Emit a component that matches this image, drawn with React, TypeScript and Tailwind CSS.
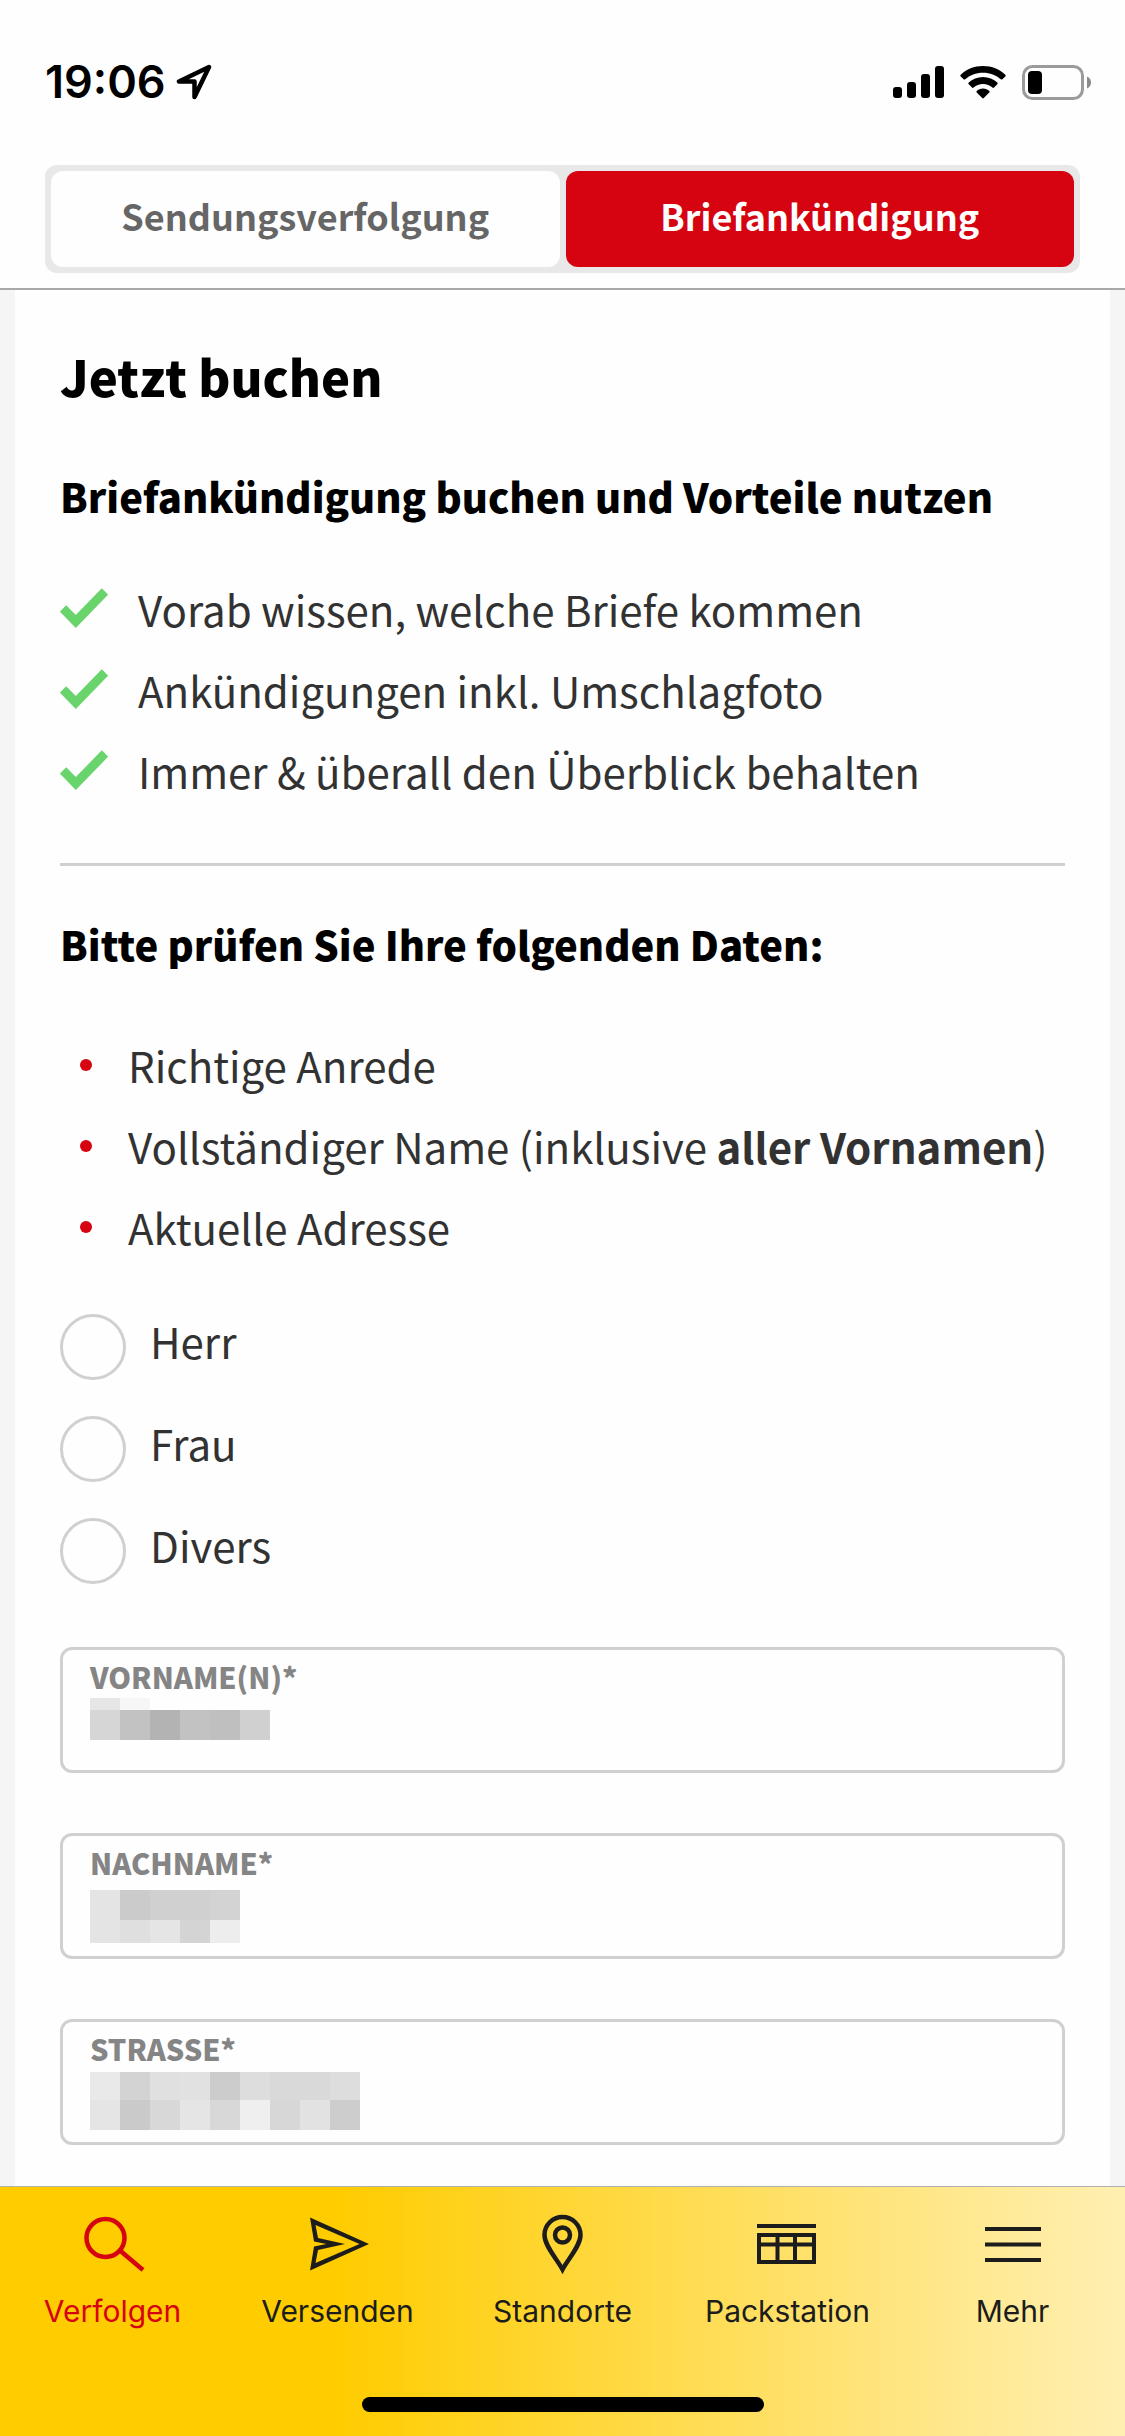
import { useState } from "react";
import type { ReactNode } from "react";

type Mosaic = { top: number; height: number; colors: string[] }[];

type FieldProps = {
  id: string;
  label: string;
  mosaic: Mosaic;
};

const ADVANTAGES = [
  "Vorab wissen, welche Briefe kommen",
  "Ankündigungen inkl. Umschlagfoto",
  "Immer & überall den Überblick behalten",
];

const SALUTATIONS = ["Herr", "Frau", "Divers"];

const FIELDS: FieldProps[] = [
  {
    id: "vorname",
    label: "VORNAME(N)*",
    mosaic: [
      { top: 0, height: 12, colors: ["#e6e6e6", "#f6f6f6"] },
      { top: 12, height: 30, colors: ["#d6d6d6", "#c2c2c2", "#b3b3b3", "#c2c2c2", "#bfbfbf", "#d0d0d0"] },
    ],
  },
  {
    id: "nachname",
    label: "NACHNAME*",
    mosaic: [
      { top: 6, height: 30, colors: ["#e4e4e4", "#cbcbcb", "#d0d0d0", "#d0d0d0", "#d3d3d3"] },
      { top: 36, height: 23, colors: ["#e4e4e4", "#dfdfdf", "#e5e5e5", "#d4d4d4", "#ededed"] },
    ],
  },
  {
    id: "strasse",
    label: "STRASSE*",
    mosaic: [
      {
        top: 2,
        height: 28,
        colors: ["#e9e9e9", "#d3d3d3", "#e0e0e0", "#e1e1e1", "#cccccc", "#dddddd", "#d9d9d9", "#d9d9d9", "#dddddd"],
      },
      {
        top: 30,
        height: 30,
        colors: ["#e5e5e5", "#cacaca", "#d8d8d8", "#e5e5e5", "#d8d8d8", "#efefef", "#d7d7d7", "#e2e2e2", "#cdcdcd"],
      },
    ],
  },
];

const NAV_ITEMS: { label: string; icon: ReactNode }[] = [
  {
    label: "Verfolgen",
    icon: (
      <g fill="none" stroke="currentColor" strokeWidth="4.5">
        <circle cx="22.5" cy="23" r="19" />
        <path d="M37 35.5 60 55" />
      </g>
    ),
  },
  {
    label: "Versenden",
    icon: (
      <path
        fill="currentColor"
        fillRule="evenodd"
        d="M2 2.5 61 29 2 55.5 6 31.5 18.5 29 6 26.5ZM7.5 10 10 23 37 29 10 35 7.5 48 51.5 29Z"
      />
    ),
  },
  {
    label: "Standorte",
    icon: (
      <g fill="none" stroke="currentColor" strokeWidth="4.5">
        <path d="M29.5 54.5C24 44 11.5 31 11.5 20a18 18 0 0 1 36 0C47.5 31 35 44 29.5 54.5Z" />
        <circle cx="29.5" cy="20" r="7.5" />
      </g>
    ),
  },
  {
    label: "Packstation",
    icon: (
      <g fill="none" stroke="currentColor" strokeWidth="4">
        <path d="M-1 11h59M1 20h55v27H1ZM1 29.5h55M19.5 20v27M37 20v27" />
      </g>
    ),
  },
  {
    label: "Mehr",
    icon: <path fill="none" stroke="currentColor" strokeWidth="4" d="M2 14h56M2 29.500h56M2 45h56" />,
  },
];

const StatusBar = () => (
  <div className="flex h-14 items-center pr-[34px] pl-[45px] font-['Inter',sans-serif] text-black">
    <span className="text-[45px] leading-[56px] font-semibold">19:06</span>
    <svg className="ml-2.5 h-9 w-9" viewBox="0 0 36 36" fill="none" stroke="currentColor" strokeWidth="4.5" strokeLinejoin="round">
      <path d="M33 3 3 17.5h15.500V33Z" />
    </svg>
    <div className="ml-auto flex items-center gap-4">
      <svg className="h-8 w-[51px]" viewBox="0 0 51 32" fill="currentColor">
        <rect x="0" y="21" width="9" height="11" rx="3" />
        <rect x="14" y="16" width="9" height="16" rx="3" />
        <rect x="28" y="8" width="9" height="24" rx="3" />
        <rect x="42" y="0" width="9" height="32" rx="3" />
      </svg>
      <svg className="h-[33px] w-[46px]" viewBox="0 0 46 33" fill="currentColor">
        <path d="M23 0C14 0 6.500 3.400.7 8.700c-.5.5-.5 1.200 0 1.700l2.900 2.900c.4.4 1.100.4 1.600 0C9.800 9.200 16 6.700 23 6.700s13.200 2.500 17.800 6.600c.5.4 1.200.4 1.600 0l2.900-2.900c.5-.5.5-1.200 0-1.700C39.500 3.400 32 0 23 0Z" />
        <path d="M23 11c-5.600 0-10.600 2.100-14.300 5.600-.5.5-.5 1.200 0 1.700l3.300 3.300c.4.4 1.100.4 1.600 0 2.500-2.200 5.800-3.600 9.400-3.600s6.900 1.400 9.400 3.600c.5.4 1.200.4 1.600 0l3.300-3.300c.5-.5.5-1.200 0-1.700C33.600 13.100 28.600 11 23 11Z" />
        <path d="M23 22.500c-2.500 0-4.700.9-6.300 2.400-.5.5-.5 1.100 0 1.600l5.500 5.600c.5.500 1.100.5 1.600 0l5.500-5.600c.5-.5.5-1.100 0-1.600-1.600-1.500-3.800-2.400-6.300-2.400Z" />
      </svg>
      <svg className="h-[35px] w-[69px]" viewBox="0 0 69 35">
        <rect x="1.500" y="1.500" width="59" height="32" rx="9" fill="none" stroke="#9b9b9b" strokeWidth="3" />
        <rect x="6" y="6" width="14" height="23" rx="4" fill="currentColor" />
        <path d="M65 11.500c2.500 1 4 3.300 4 6s-1.500 5-4 6Z" fill="#8b8b8b" />
      </svg>
    </div>
  </div>
);

const Field = ({ id, label, mosaic }: FieldProps) => (
  <div className="relative">
    <input
      id={id}
      type="text"
      className="block h-[126px] w-full rounded-xl border-3 border-[#d0d0d0] bg-transparent px-[27px] pt-10 text-[42px] outline-none"
    />
    {/* floating label and the redacted value */}
    <div className="pointer-events-none absolute top-[11px] left-[30px]">
      <label htmlFor={id} className="mb-1 block text-[29px] leading-[36px] font-black text-[#858585]">
        {label}
      </label>
      <svg className="h-[60px] w-[270px]" viewBox="0 0 270 60" shapeRendering="crispEdges" aria-hidden="true">
        {mosaic.map((row) =>
          row.colors.map((color, i) => (
            <rect key={`${row.top}-${i}`} x={i * 30} y={row.top} width="30" height={row.height} fill={color} />
          ))
        )}
      </svg>
    </div>
  </div>
);

const App = () => {
  const [tab, setTab] = useState("Briefankündigung");
  const [salutation, setSalutation] = useState("");

  return (
    <div className="flex min-h-screen flex-col bg-[#f5f5f5] font-['Noto_Sans_CJK_SC','Noto_Sans',sans-serif] text-[#323232]">
      <header className="border-b-2 border-[#a8a8a8] bg-[#fefefe] pt-[54px] pb-[15px]">
        <StatusBar />
        <div className="mx-[45px] mt-[55px] flex gap-1.5 rounded-xl bg-[#e8e8e8] p-1.5">
          {["Sendungsverfolgung", "Briefankündigung"].map((name) => (
            <button
              key={name}
              type="button"
              onClick={() => setTab(name)}
              className={`h-24 flex-1 rounded-xl pb-2 text-[36px] leading-[48px] font-bold ${
                tab === name ? "bg-[#d50410] text-white" : "bg-[#fefefe] text-[#666666]"
              }`}
            >
              {name}
            </button>
          ))}
        </div>
      </header>

      <main className="mx-[15px] flex-1 bg-[#fefefe] px-[45px] pt-[54px] pb-10">
        <h1 className="text-[49px] leading-[64px] font-black text-black">Jetzt buchen</h1>
        <h2 className="mt-16 text-[40px] leading-[48px] font-black text-black">
          Briefankündigung buchen und Vorteile nutzen
        </h2>
        <ul className="mt-12 text-[42px] leading-[81px]">
          {ADVANTAGES.map((text) => (
            <li key={text} className="flex items-center gap-[30px]">
              <svg className="h-12 w-12" viewBox="0 0 48 48" fill="none" stroke="#69d46c" strokeWidth="9">
                <path d="M3 23.500 15.800 36.500 45 6.500" />
              </svg>
              {text}
            </li>
          ))}
        </ul>
        <hr className="mt-[52px] border-t-3 border-[#d0d0d0]" />

        <h2 className="mt-[54px] text-[40px] leading-[48px] font-black text-black">
          Bitte prüfen Sie Ihre folgenden Daten:
        </h2>
        <ul className="mt-14 text-[42px] leading-[81px]">
          {["Richtige Anrede", "Vollständiger Name", "Aktuelle Adresse"].map((text) => (
            <li key={text} className="flex items-center pl-5">
              <span className="mr-9 h-3 w-3 rounded-full bg-[#d50410]" />
              <span>
                {text}
                {text === "Vollständiger Name" && (
                  <>
                    {" "}
                    (inklusive <b className="font-bold">aller Vornamen</b>)
                  </>
                )}
              </span>
            </li>
          ))}
        </ul>

        <form>
          <div className="mt-[47px] flex flex-col gap-9">
            {SALUTATIONS.map((name) => (
              <label key={name} className="flex items-start gap-6 text-[42px] leading-[54px]">
                <input
                  type="radio"
                  name="anrede"
                  value={name}
                  checked={salutation === name}
                  onChange={() => setSalutation(name)}
                  className="h-[66px] w-[66px] appearance-none rounded-full border-3 border-[#d0d0d0] checked:border-[20px] checked:border-[#d50410]"
                />
                {name}
              </label>
            ))}
          </div>
          <div className="mt-[63px] flex flex-col gap-[60px]">
            {FIELDS.map((field) => (
              <Field key={field.id} {...field} />
            ))}
          </div>
        </form>
      </main>

      <footer className="border-t border-[#b0b0b0] bg-[linear-gradient(90deg,#ffcc00_30%,#ffe57f_79%,#fff0b2_100%)] pt-7 pb-6">
        <nav className="grid grid-cols-5 font-['Inter',sans-serif] text-[30px] leading-[36px] text-[#1c1c1c]">
          {NAV_ITEMS.map(({ label, icon }, i) => (
            <a key={label} href="#" className={`flex flex-col items-center gap-[18px] ${i === 0 ? "text-[#d50410]" : ""}`}>
              <svg className="h-[60px] w-[60px] overflow-visible" viewBox="0 0 60 60">
                {icon}
              </svg>
              {label}
            </a>
          ))}
        </nav>
        <div className="mx-auto mt-[68px] h-[15px] w-[402px] rounded-full bg-black" />
      </footer>
    </div>
  );
};

export default App;
